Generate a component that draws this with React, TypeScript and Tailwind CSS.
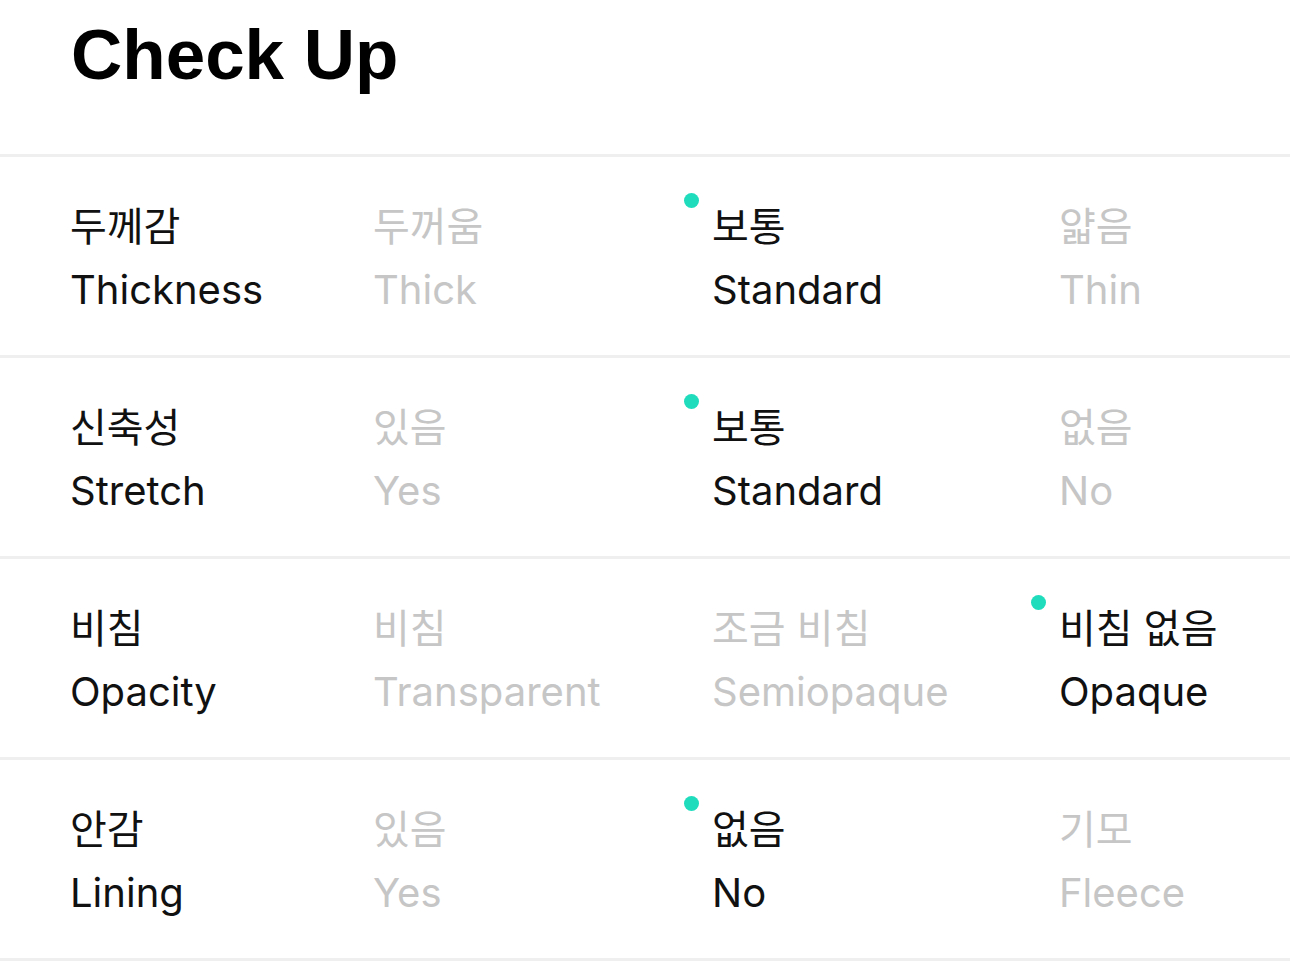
const rows = [
  {
    ko: '두께감',
    en: 'Thickness',
    options: [
      { ko: '두꺼움', en: 'Thick' },
      { ko: '보통', en: 'Standard' },
      { ko: '얇음', en: 'Thin' },
    ],
    selected: 1,
  },
  {
    ko: '신축성',
    en: 'Stretch',
    options: [
      { ko: '있음', en: 'Yes' },
      { ko: '보통', en: 'Standard' },
      { ko: '없음', en: 'No' },
    ],
    selected: 1,
  },
  {
    ko: '비침',
    en: 'Opacity',
    options: [
      { ko: '비침', en: 'Transparent' },
      { ko: '조금 비침', en: 'Semiopaque' },
      { ko: '비침 없음', en: 'Opaque' },
    ],
    selected: 2,
  },
  {
    ko: '안감',
    en: 'Lining',
    options: [
      { ko: '있음', en: 'Yes' },
      { ko: '없음', en: 'No' },
      { ko: '기모', en: 'Fleece' },
    ],
    selected: 1,
  },
];

export default function App() {
  return (
    <div className="min-h-screen bg-white font-['Inter','Noto_Sans_CJK_KR',sans-serif] text-[#111111]">
      {/* Header */}
      <div className="h-[154px] pl-[71px] pt-[19px]">
        <h1 className="font-['Liberation_Sans','Noto_Sans_CJK_KR',sans-serif] text-[71px] font-bold leading-none text-black">
          Check Up
        </h1>
      </div>

      {/* Check rows */}
      <div className="border-b-[3px] border-[#efefef]">
        {rows.map((row) => (
          <div
            key={row.en}
            className="grid grid-cols-[303px_339px_347px_1fr] border-t-[3px] border-[#efefef] pb-[33px] pl-[70px] pt-[37px] text-[40px] leading-[65px]"
          >
            <div>
              <div>{row.ko}</div>
              <div className="-mt-[2px]">{row.en}</div>
            </div>
            {row.options.map((opt, i) => (
              <div
                key={opt.en}
                className={`relative ${i === row.selected ? 'text-[#111111]' : 'text-[#c6c6c6]'}`}
              >
                {i === row.selected && (
                  <span className="absolute -left-[28px] -top-[1px] h-[15px] w-[15px] rounded-full bg-[#1fdcbd]" />
                )}
                <div>{opt.ko}</div>
                <div className="-mt-[2px]">{opt.en}</div>
              </div>
            ))}
          </div>
        ))}
      </div>
    </div>
  );
}
